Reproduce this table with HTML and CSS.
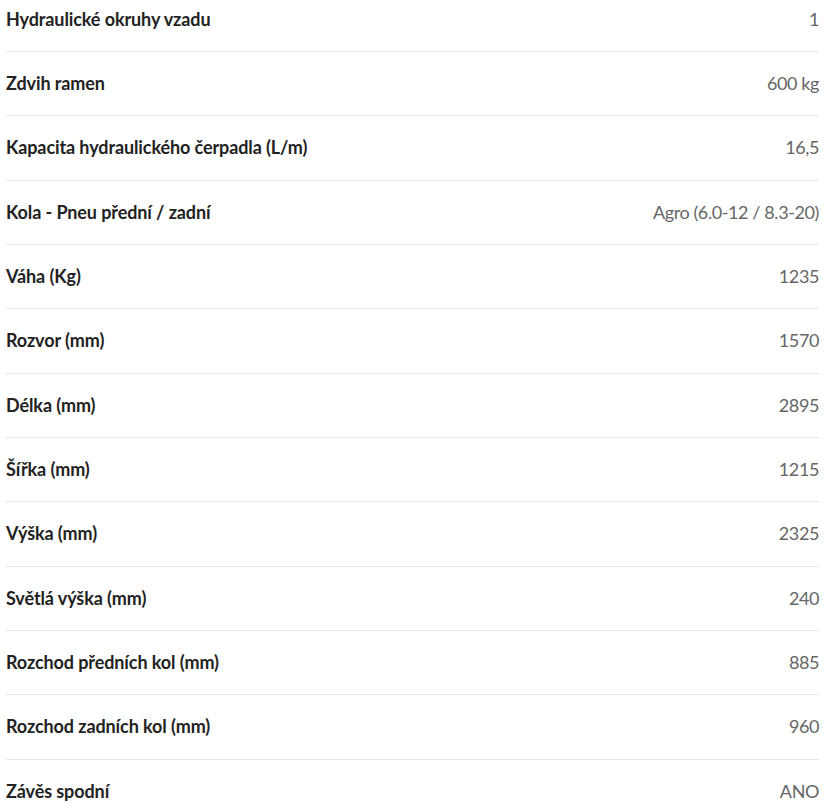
FILE: index.html
```html
<!DOCTYPE html>
<html lang="cs">
<head>
<meta charset="utf-8">
<link rel="stylesheet" href="styles.css">
</head>
<body>
<div class="specs">
  <div class="row"><span class="label">Hydraulické okruhy vzadu</span><span class="value">1</span></div>
  <div class="row"><span class="label">Zdvih ramen</span><span class="value">600 kg</span></div>
  <div class="row"><span class="label">Kapacita hydraulického čerpadla (L/m)</span><span class="value">16,5</span></div>
  <div class="row"><span class="label">Kola - Pneu přední / zadní</span><span class="value">Agro (6.0-12 / 8.3-20)</span></div>
  <div class="row"><span class="label">Váha (Kg)</span><span class="value">1235</span></div>
  <div class="row"><span class="label">Rozvor (mm)</span><span class="value">1570</span></div>
  <div class="row"><span class="label">Délka (mm)</span><span class="value">2895</span></div>
  <div class="row"><span class="label">Šířka (mm)</span><span class="value">1215</span></div>
  <div class="row"><span class="label">Výška (mm)</span><span class="value">2325</span></div>
  <div class="row"><span class="label">Světlá výška (mm)</span><span class="value">240</span></div>
  <div class="row"><span class="label">Rozchod předních kol (mm)</span><span class="value">885</span></div>
  <div class="row"><span class="label">Rozchod zadních kol (mm)</span><span class="value">960</span></div>
  <div class="row"><span class="label">Závěs spodní</span><span class="value">ANO</span></div>
</div>
</body>
</html>
```
FILE: styles.css
```css
html, body {
  margin: 0;
  padding: 0;
  background: #fff;
  overflow: hidden;
}
body {
  font-family: Lato, "Liberation Sans", sans-serif;
  font-size: 18px;
}
.specs {
  margin: -12.33px 10px 0 6px;
  display: flex;
  flex-direction: column;
}
.row {
  display: flex;
  justify-content: space-between;
  align-items: center;
  padding: 20px 0;
  line-height: 23.33px;
  border-bottom: 1px solid #e5e5e5;
}
.label {
  font-weight: 700;
  color: #222;
  letter-spacing: -0.1px;
}
.value {
  color: #666;
  letter-spacing: -0.4px;
}
```
